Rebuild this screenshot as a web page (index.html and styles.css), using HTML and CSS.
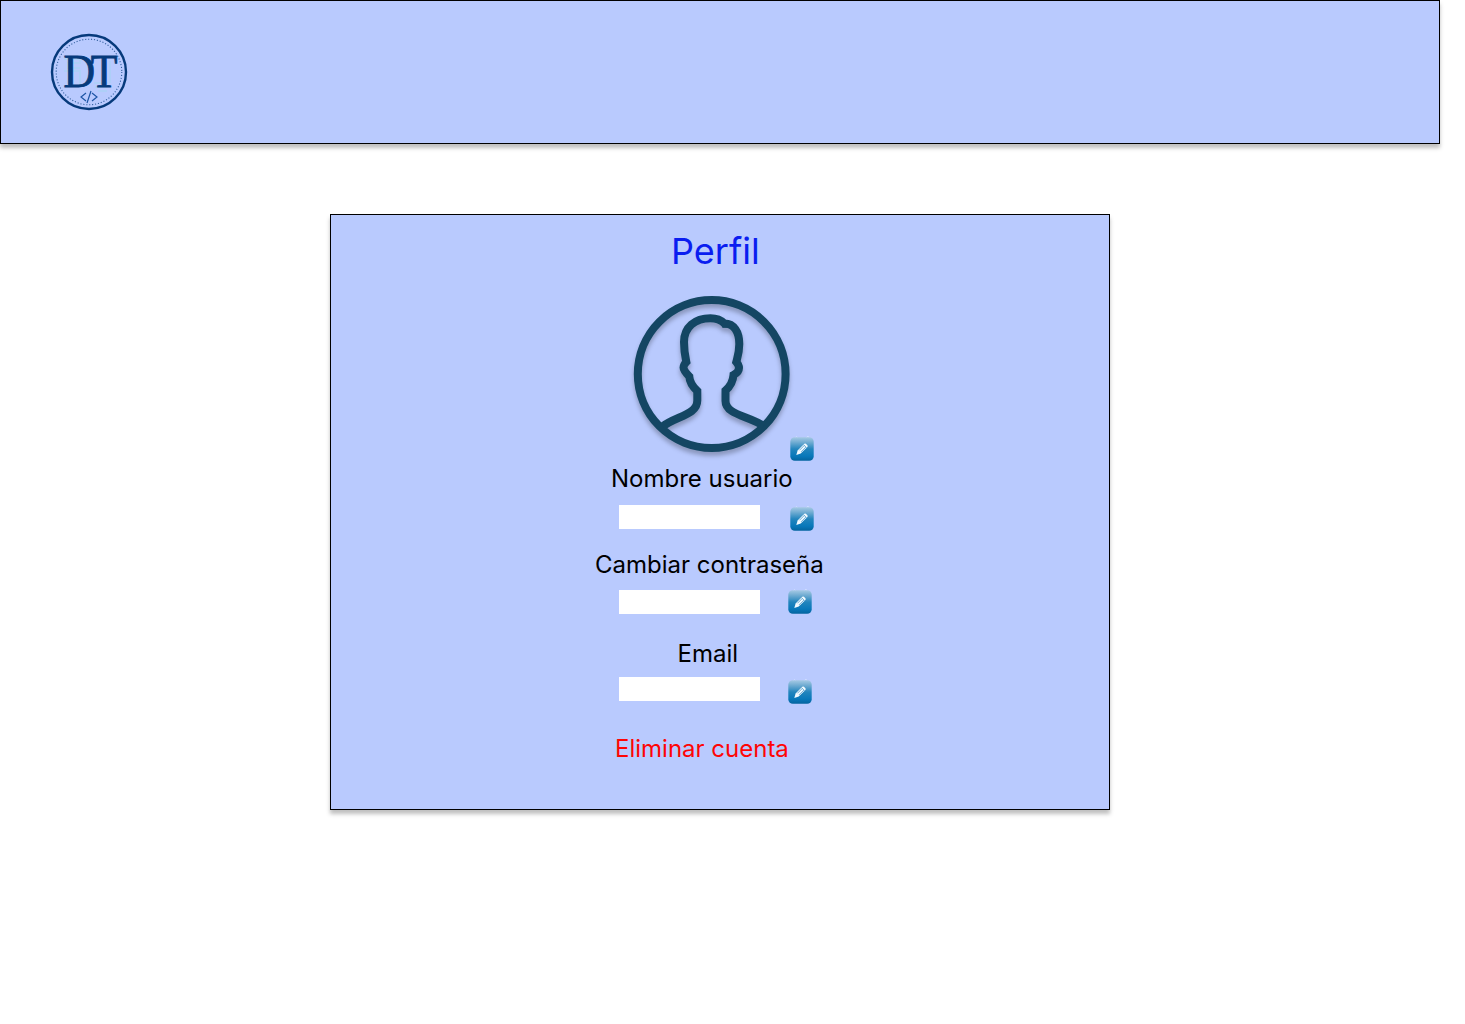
FILE: index.html
```html
<!DOCTYPE html>
<html lang="es">
<head>
<meta charset="utf-8">
<title>Perfil</title>
<link rel="stylesheet" href="styles.css">
</head>
<body>
<svg class="defs" aria-hidden="true">
  <defs>
    <linearGradient id="tile" x1="0" y1="0" x2="0" y2="1">
      <stop offset="0" stop-color="#a5c9e4"/>
      <stop offset=".2" stop-color="#74aed3"/>
      <stop offset=".5" stop-color="#2385bd"/>
      <stop offset=".8" stop-color="#0878ba"/>
      <stop offset="1" stop-color="#04649f"/>
    </linearGradient>
    <symbol id="pencil" viewBox="0 0 24 26">
      <path d="M5 3l1.500-1.500L8 3M16 3l2-2 1 2" fill="none" stroke="#d3e0ff" stroke-width=".8"/>
      <rect x=".3" y="2.300" width="23.400" height="23.400" rx="4.500" fill="url(#tile)"/>
      <path d="M6.300 20l1.300-4.500 6.700-6.700q.8-.7 1.600 0l1.500 1.500q.7.8 0 1.600l-6.700 6.700z" fill="#f3faff"/>
      <path d="M9.400 15.300l4.800-4.800M11 16.900l4.800-4.800M13.500 9.700l3 3" fill="none" stroke="#3f92c4" stroke-width=".75"/>
    </symbol>
  </defs>
</svg>
<header class="topbar">
  <svg class="logo" viewBox="0 0 78 78" role="img" aria-label="DT">
    <path d="M14 26h16v4H18v5h12M14 38h16v14M44 50h14M45 54h12M48 58h9M60 28v22" fill="none" stroke="#a9d2f5" stroke-width="2" opacity=".7"/>
    <circle cx="39" cy="39" r="37" fill="none" stroke="#063a7b" stroke-width="2.400"/>
    <circle class="logo-dots" cx="39" cy="39" r="32.800"/>
    <text class="logo-text" transform="translate(13.500 53.800) scale(.93 1)">DT</text>
    <path d="M36 60l-5 4 5 4M42 60l5 4-5 4M41 58l-4 12" fill="none" stroke="#1c55a5" stroke-width="1.200"/>
  </svg>
</header>
<main class="card">
  <h1 class="title">Perfil</h1>
  <div class="avatar-row">
    <svg class="avatar" viewBox="0 0 170 176" role="img" aria-label="Avatar">
      <g fill="none" stroke="#144663" stroke-width="8">
        <circle cx="91.700" cy="89" r="73.900"/>
        <path d="M42.500 141.500C56 131 77.300 130 77.300 115.500V106C73 102 69.600 97 69.300 91.500C66 88 63.500 85 63.500 82.500Q63.500 80 66.300 77C64.500 69 64 64 64 57C64 42 75 33.200 90.500 33.200C96 33.200 100.500 34.500 104.500 38.500C114 38.500 119.300 47 119.300 59C119.300 67 117.500 72 116.300 77Q119 80 119 83Q119 87 113.500 90C113 97 109.500 102 105.500 105.500V116C105.500 130 130 131 143.500 141"/>
      </g>
      <path d="M100.500 38.500l2 4.300h6l2-5-6-3z" fill="#144663"/>
    </svg>
    <button class="edit" aria-label="Editar avatar"><svg viewBox="0 0 24 26"><use href="#pencil"/></svg></button>
  </div>
  <label class="label label-name" for="name">Nombre usuario</label>
  <div class="field field-name">
    <input id="name" class="input" type="text">
    <button class="edit" aria-label="Editar nombre"><svg viewBox="0 0 24 26"><use href="#pencil"/></svg></button>
  </div>
  <label class="label label-password" for="password">Cambiar contraseña</label>
  <div class="field field-password">
    <input id="password" class="input" type="password">
    <button class="edit" aria-label="Editar contraseña"><svg viewBox="0 0 24 26"><use href="#pencil"/></svg></button>
  </div>
  <label class="label label-email" for="email">Email</label>
  <div class="field field-email">
    <input id="email" class="input" type="email">
    <button class="edit" aria-label="Editar email"><svg viewBox="0 0 24 26"><use href="#pencil"/></svg></button>
  </div>
  <a class="label delete">Eliminar cuenta</a>
</main>
</body>
</html>
```

FILE: styles.css
```css
* {
  box-sizing: border-box;
}

body {
  margin: 0;
  min-height: 1024px;
  background: #fff;
  color: #000;
  font-family: Inter, "Liberation Sans", sans-serif;
}

.defs {
  position: absolute;
  width: 0;
  height: 0;
}

.topbar {
  display: flex;
  align-items: center;
  width: 1440px;
  height: 144px;
  padding-left: 49px;
  border: 1px solid #000;
  background: #b9cafe;
  box-shadow: 0 4px 4px rgba(0, 0, 0, 0.25);
}

.logo {
  width: 78px;
  height: 78px;
}

.logo-dots {
  fill: none;
  stroke: #315f9e;
  stroke-width: 1.1;
  stroke-dasharray: 1.1 1.85;
}

.logo-text {
  fill: #063a7b;
  stroke: #063a7b;
  stroke-width: 0.9;
  font-family: "Liberation Serif", serif;
  font-size: 47px;
  letter-spacing: -4.5px;
}

.card {
  display: flex;
  flex-direction: column;
  align-items: flex-start;
  width: 780px;
  height: 596px;
  margin: 70px 0 0 330px;
  padding: 14px 0 0 264px;
  border: 1px solid #000;
  background: #b9cafe;
  box-shadow: 0 4px 4px rgba(0, 0, 0, 0.25);
}

.title {
  margin: 0 0 0 76px;
  color: #0a1df0;
  font-size: 36px;
  font-weight: 400;
  line-height: 44px;
}

.avatar-row {
  display: flex;
  align-items: flex-end;
  height: 176px;
  margin: 12px 0 2px 25px;
}

.avatar {
  width: 170px;
  height: 176px;
  filter: drop-shadow(0 4px 2px rgba(0, 0, 0, 0.25));
}

.edit {
  display: block;
  width: 24px;
  height: 26px;
  padding: 0;
  border: 0;
  background: none;
}

.edit svg {
  display: block;
  width: 24px;
  height: 26px;
}

.label {
  height: 30px;
  font-size: 24px;
  line-height: 32px;
  white-space: nowrap;
}

.label-name {
  margin-left: 16px;
}

.label-password {
  margin-left: 0;
}

.label-email {
  margin-left: 82.5px;
}

.field {
  display: flex;
  align-items: flex-start;
  margin-left: 24px;
}

.field-name {
  height: 44px;
  margin-top: 12px;
  gap: 30px;
}

.field-password {
  height: 48px;
  margin-top: 11px;
  gap: 28px;
}

.field-email {
  height: 56px;
  margin-top: 9px;
  gap: 28px;
}

.field-password .edit {
  margin-top: -2px;
}

.field-email .edit {
  margin-top: 1px;
}

.input {
  width: 141px;
  height: 24px;
  padding: 0 6px;
  border: 0;
  background: #fff;
  font: inherit;
}

.delete {
  margin-left: 20px;
  color: #ff0505;
}
```
